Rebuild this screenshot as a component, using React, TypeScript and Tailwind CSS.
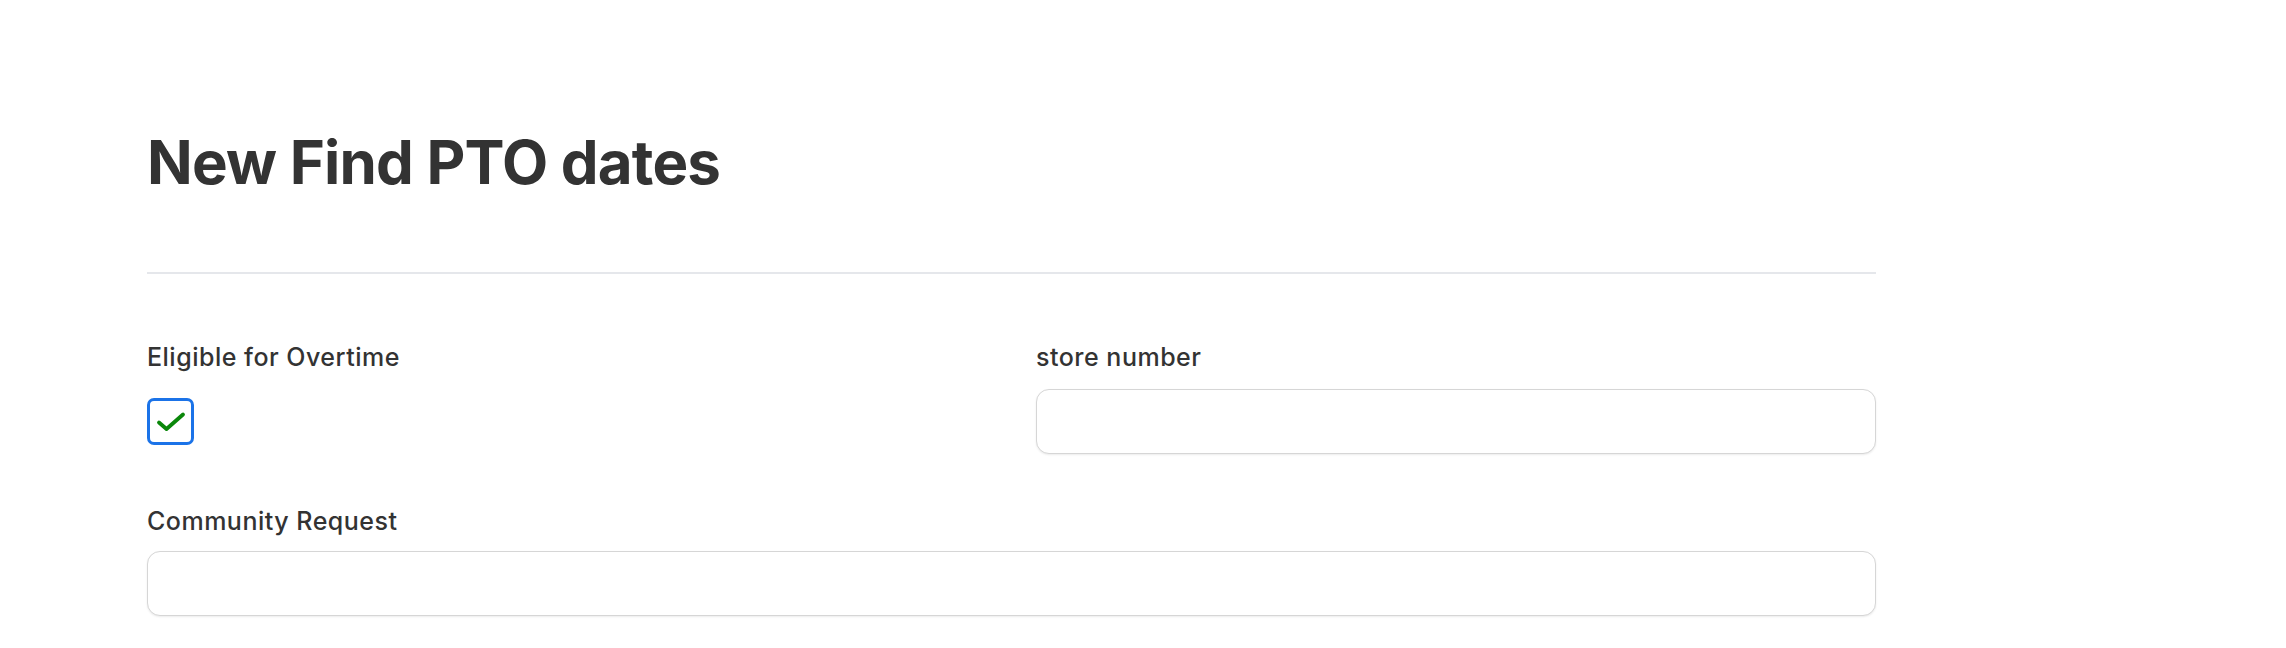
import React from "react";

export default function App() {
  return (
    <div className="min-h-[648px] w-full bg-white text-[#333333]" style={{ fontFamily: "Inter, 'Noto Sans', sans-serif" }}>
      <div className="ml-[147px] w-[1729px] pt-[132px]">
        <h1 className="text-[60px] font-bold leading-[60px] tracking-[-0.8px]">New Find PTO dates</h1>
        <div className="mt-[80px] h-[2px] bg-[#e5e7eb]" />
        <div className="mt-[67px] grid grid-cols-2 gap-x-[49px] gap-y-[51px]">
          <div className="flex flex-col">
            <label className="block h-[33px] text-[25px] font-medium leading-[33px] tracking-[0.5px]">Eligible for Overtime</label>
            <div className="mt-[24px] flex h-[47px] w-[47px] items-center justify-center rounded-[7px] border-[3px] border-[#1b73e8] bg-white">
              <svg width="30" height="24" viewBox="0 0 30 24" fill="none">
                <path d="M3 12.5 L10.5 19 L27 4.5" stroke="#0a870a" strokeWidth="3.8" strokeLinecap="round" strokeLinejoin="round" />
              </svg>
            </div>
          </div>
          <div className="flex flex-col">
            <label className="block h-[33px] text-[25px] font-medium leading-[33px] tracking-[0.5px]">store number</label>
            <div className="mt-[15px] h-[65px] rounded-[13px] border border-[#d6d6d6] bg-white shadow-[0_1px_2px_rgba(0,0,0,0.08)]" />
          </div>
          <div className="col-span-2 flex flex-col">
            <label className="block h-[33px] text-[25px] font-medium leading-[33px] tracking-[0.5px]">Community Request</label>
            <div className="mt-[13px] h-[65px] rounded-[13px] border border-[#d6d6d6] bg-white shadow-[0_1px_2px_rgba(0,0,0,0.08)]" />
          </div>
        </div>
      </div>
    </div>
  );
}
